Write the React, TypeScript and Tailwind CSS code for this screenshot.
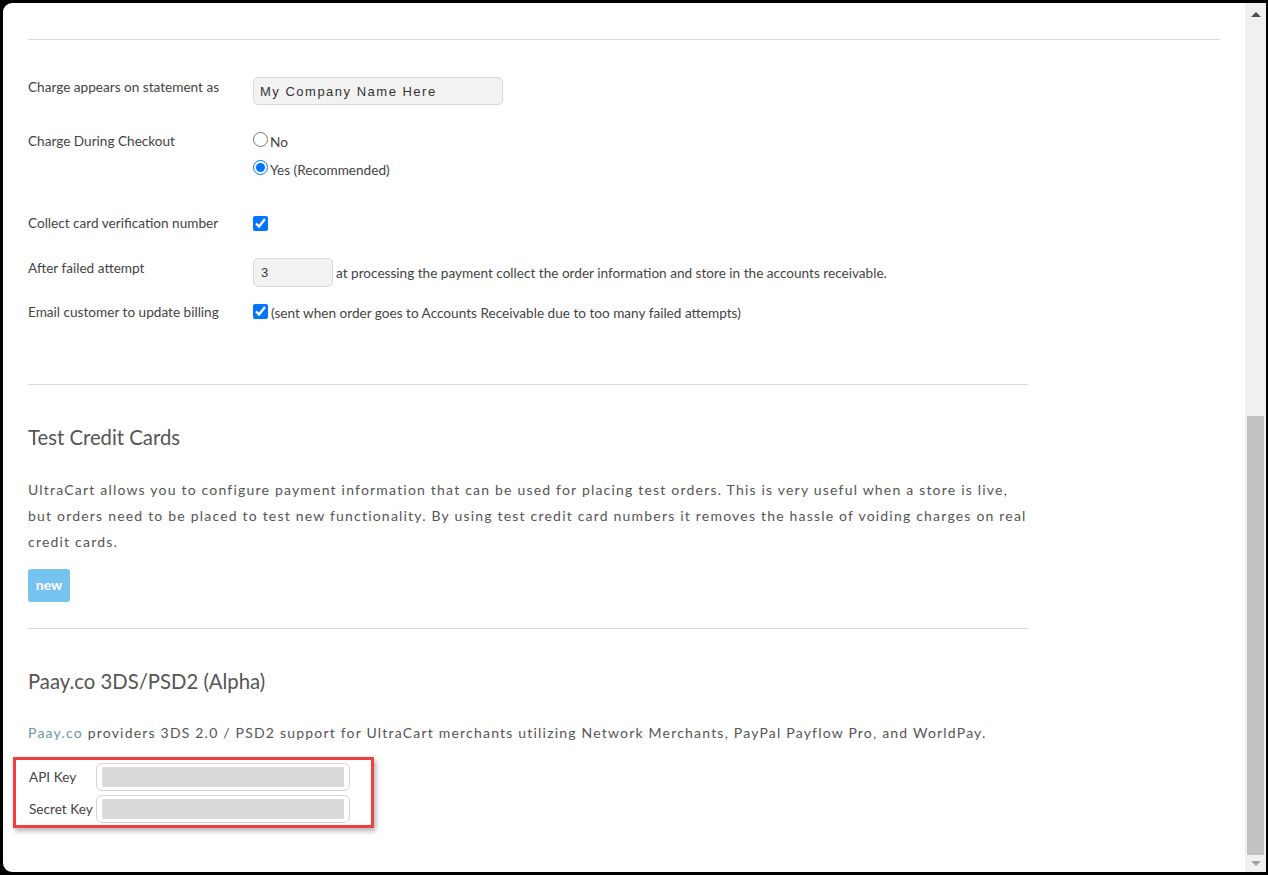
import { FC } from 'react';

const lato = { fontFamily: 'Lato, "Open Sans", sans-serif' };

const Label: FC<{ text: string }> = ({ text }) => (
  <div className="w-[225px] shrink-0 text-[13.6px] leading-[18px] text-[#444]">{text}</div>
);

const Scrollbar: FC = () => (
  <div className="w-[21px] shrink-0 bg-[#f0f0f0] flex flex-col items-center">
    <div className="h-[22px] flex items-center justify-center">
      <div className="w-0 h-0 border-l-[5px] border-r-[5px] border-b-[5px] border-l-transparent border-r-transparent border-b-[#505050]" />
    </div>
    <div className="h-[391px]" />
    <div className="w-[17px] flex-1 bg-[#c1c1c1]" />
    <div className="h-[17px] flex items-center justify-center">
      <div className="w-0 h-0 border-l-[5px] border-r-[5px] border-t-[5px] border-l-transparent border-r-transparent border-t-[#a3a3a3]" />
    </div>
  </div>
);

const KeyInput: FC = () => (
  <div className="w-[254px] h-[28px] border border-[#d4d4d4] rounded-[6px] bg-white px-[5px] py-[3px]">
    <div className="h-full bg-[#d9d9d9] rounded-[2px]" />
  </div>
);

export default function App() {
  return (
    <div className="w-[1268px] h-[875px] bg-black pt-[3px] pl-[3px] pr-[2px] pb-[3px]" style={lato}>
      <div className="h-full bg-white rounded-l-[9px] flex overflow-hidden">
        <div className="flex-1 min-w-0 pl-[25px] pr-[25px] pt-[36px]">
          <div className="border-t border-[#dcdcdc]" />

          <div className="flex items-start mt-[37px]">
            <div className="pt-[1px]"><Label text="Charge appears on statement as" /></div>
            <div
              className="w-[250px] h-[28px] bg-[#f2f2f2] border border-[#d8d8d8] rounded-[5px] px-[6px] pt-[1px] flex items-center text-[13px] tracking-[1.5px] text-[#333]"
              style={{ fontFamily: '"Liberation Sans", Arial, sans-serif' }}
            >
              My Company Name Here
            </div>
          </div>

          <div className="flex items-start mt-[26px]">
            <div className="pt-[1px]"><Label text="Charge During Checkout" /></div>
            <div className="flex flex-col text-[13.6px] text-[#444]">
              <label className="h-[20px] flex items-center gap-[2px]">
                <input type="radio" name="charge" className="w-[15px] h-[15px] m-0 -mt-[3px]" readOnly />
                <span className="pt-[3px]">No</span>
              </label>
              <label className="h-[20px] mt-[8px] flex items-center gap-[2px]">
                <input type="radio" name="charge" defaultChecked className="w-[15px] h-[15px] m-0 -mt-[3px]" />
                <span className="pt-[3px]">Yes (Recommended)</span>
              </label>
            </div>
          </div>

          <div className="flex items-center h-[20px] mt-[34px]">
            <Label text="Collect card verification number" />
            <input type="checkbox" defaultChecked className="w-[15px] h-[15px] m-0" />
          </div>

          <div className="flex items-start mt-[25px]">
            <div className="pt-[1px]"><Label text="After failed attempt" /></div>
            <div className="flex items-center gap-[3px] text-[13.6px] text-[#444]">
              <div
                className="w-[80px] h-[29px] bg-[#f2f2f2] border border-[#d8d8d8] rounded-[5px] px-[7px] flex items-center text-[13px] text-[#333]"
                style={{ fontFamily: '"Liberation Sans", Arial, sans-serif' }}
              >
                3
              </div>
              <span className="pt-[2px]">at processing the payment collect the order information and store in the accounts receivable.</span>
            </div>
          </div>

          <div className="flex items-center h-[20px] mt-[15px]">
            <Label text="Email customer to update billing" />
            <div className="flex items-center gap-[3px] text-[13.6px] text-[#444]">
              <input type="checkbox" defaultChecked className="w-[15px] h-[15px] m-0 -mt-[1px]" />
              <span className="pt-[2px]">(sent when order goes to Accounts Receivable due to too many failed attempts)</span>
            </div>
          </div>

          <div className="w-[1000px] border-t border-[#dcdcdc] mt-[62px]" />

          <h2 className="mt-[38px] text-[20.3px] leading-[28px] text-[#555]">Test Credit Cards</h2>
          <p className="w-[1000px] mt-[26px] text-[14px] leading-[26px] tracking-[1.2px] text-[#555]">
            UltraCart allows you to configure payment information that can be used for placing test orders. This is very useful when a store is live, but orders need to be placed to test new functionality. By using test credit card numbers it removes the hassle of voiding charges on real credit cards.
          </p>
          <button className="mt-[14px] w-[42px] h-[33px] bg-[#76c3f0] rounded-[3px] text-white text-[14px] font-bold leading-none pb-[2px]">
            new
          </button>

          <div className="w-[1000px] border-t border-[#dcdcdc] mt-[26px]" />

          <h2 className="mt-[38px] text-[20.3px] leading-[28px] text-[#555]">Paay.co 3DS/PSD2 (Alpha)</h2>
          <p className="mt-[25px] text-[14px] leading-[26px] tracking-[1.2px] text-[#555]">
            <span className="text-[#6a92b4]">Paay.co</span> providers 3DS 2.0 / PSD2 support for UltraCart merchants utilizing Network Merchants, PayPal Payflow Pro, and WorldPay.
          </p>

          <div className="-ml-[15px] mt-[11px] w-[361px] border-[3px] border-[#ef3f3f] pt-[3px] pb-[2px] pl-[13px] shadow-[2px_3px_5px_rgba(0,0,0,0.3)]">
            <div className="flex items-center">
              <div className="w-[67px] text-[13.6px] text-[#444]">API Key</div>
              <KeyInput />
            </div>
            <div className="flex items-center mt-[4px]">
              <div className="w-[67px] text-[13.6px] text-[#444]">Secret Key</div>
              <KeyInput />
            </div>
          </div>
        </div>
        <Scrollbar />
      </div>
    </div>
  );
}
